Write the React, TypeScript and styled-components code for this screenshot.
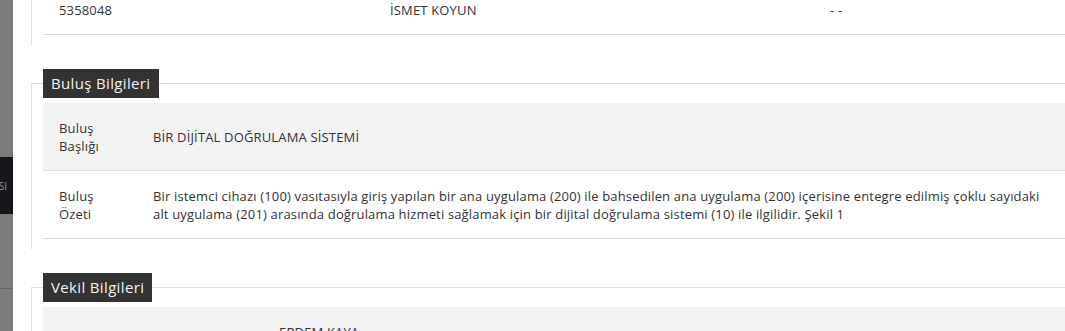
import styled, { createGlobalStyle } from 'styled-components';

const GlobalStyle = createGlobalStyle`
  html, body {
    margin: 0;
    padding: 0;
    background: #fff;
    overflow: hidden;
  }
  body {
    font-family: "Open Sans", "Liberation Sans", sans-serif;
    color: #333;
  }
`;

const Page = styled.div`
  display: flex;
  width: 1065px;
  height: 331px;
  overflow: hidden;
`;

const SideStrip = styled.aside`
  width: 13px;
  flex-shrink: 0;
  display: flex;
  flex-direction: column;
  background: #7b7b7b;
`;

const StripGap = styled.div<{ $h: number }>`
  height: ${p => p.$h}px;
  flex-shrink: 0;
`;

const StripMenu = styled.div`
  height: 57px;
  background: #15171a;
  color: #9a9a9a;
  font-size: 10px;
  padding-right: 6px;
  display: flex;
  align-items: center;
  justify-content: flex-end;
  overflow: hidden;
  white-space: nowrap;
`;

const StripRule = styled.div`
  height: 1px;
  background: #666;
`;

const Main = styled.main`
  flex: 1;
  min-width: 0;
  margin-left: 18px;
`;

const TopSection = styled.section`
  margin-top: -15px;
  border-left: 1px solid #ddd;
  padding: 0 0 10px 11px;
`;

const Fieldset = styled.fieldset`
  margin: 24px 0 0;
  padding: 0 0 10px 11px;
  border: 1px solid #ddd;
  border-right: none;
  border-bottom: none;
  min-width: 0;
`;

const Legend = styled.legend`
  background: #333;
  color: #f2f2f2;
  height: 29px;
  line-height: 29px;
  padding: 0 8px;
  font-size: 15px;
  font-weight: 500;
  letter-spacing: 0.35px;
`;

const Table = styled.table`
  width: 100%;
  border-collapse: collapse;
  margin-top: 5px;
  font-size: 13px;
  line-height: 18px;
  letter-spacing: 0.16px;
`;

const PlainTable = styled(Table)`
  margin-top: 0;
`;

const Row = styled.tr<{ $shaded?: boolean }>`
  background: ${p => (p.$shaded ? '#f3f3f3' : '#fff')};
  border-bottom: 1px solid #ddd;
`;

const Cell = styled.td<{ $w?: number }>`
  padding: 16px 16px 15px;
  vertical-align: middle;
  text-align: left;
  ${p => (p.$w ? `width: ${p.$w}px;` : '')}
`;

const Label = styled(Cell)`
  width: 62px;
`;

export default function App() {
  return (
    <>
      <GlobalStyle />
      <Page>
        <SideStrip>
          <StripGap $h={157} />
          <StripMenu>SI</StripMenu>
          <StripGap $h={74} />
          <StripRule />
        </SideStrip>
        <Main>
          <TopSection>
            <PlainTable>
              <tbody>
                <Row>
                  <Cell $w={299}>5358048</Cell>
                  <Cell $w={408}>İSMET KOYUN</Cell>
                  <Cell>- -</Cell>
                </Row>
              </tbody>
            </PlainTable>
          </TopSection>

          <Fieldset>
            <Legend>Buluş Bilgileri</Legend>
            <Table>
              <tbody>
                <Row $shaded>
                  <Label>Buluş Başlığı</Label>
                  <Cell>BİR DİJİTAL DOĞRULAMA SİSTEMİ</Cell>
                </Row>
                <Row>
                  <Label>Buluş Özeti</Label>
                  <Cell>
                    Bir istemci cihazı (100) vasıtasıyla giriş yapılan bir ana uygulama (200) ile bahsedilen ana
                    uygulama (200) içerisine entegre edilmiş çoklu sayıdaki
                    <br />
                    alt uygulama (201) arasında doğrulama hizmeti sağlamak için bir dijital doğrulama sistemi (10) ile
                    ilgilidir. Şekil 1
                  </Cell>
                </Row>
              </tbody>
            </Table>
          </Fieldset>

          <Fieldset>
            <Legend>Vekil Bilgileri</Legend>
            <Table>
              <tbody>
                <Row $shaded>
                  <Cell $w={188}></Cell>
                  <Cell>ERDEM KAYA</Cell>
                </Row>
              </tbody>
            </Table>
          </Fieldset>
        </Main>
      </Page>
    </>
  );
}
